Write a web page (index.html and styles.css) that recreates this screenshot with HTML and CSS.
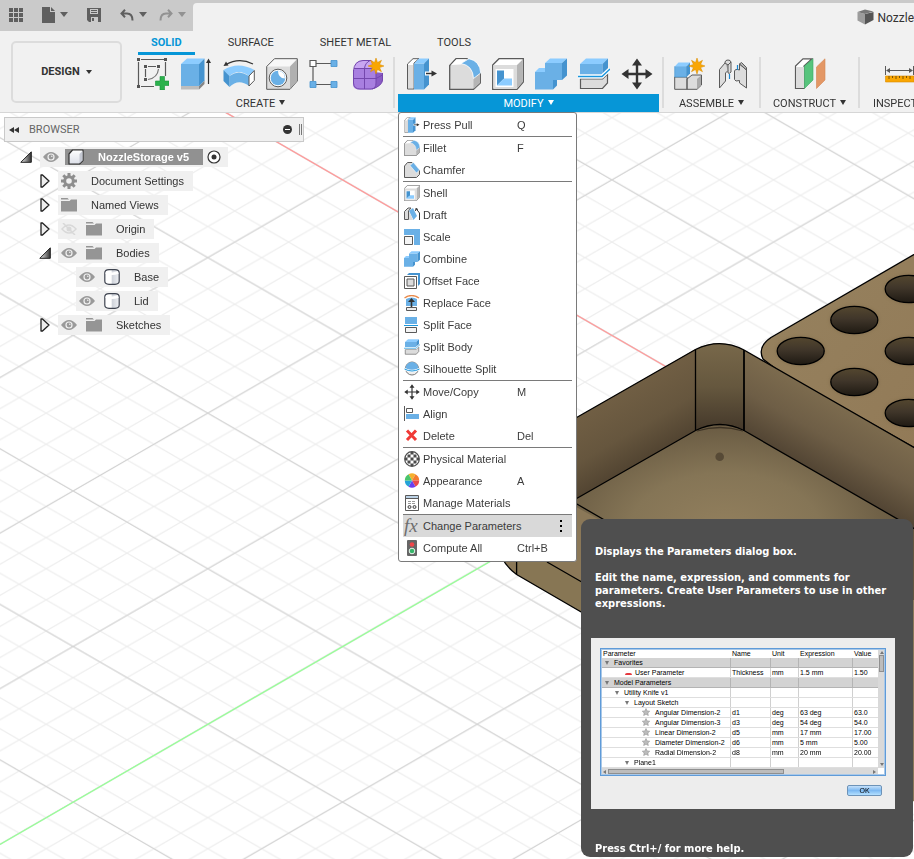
FILE: index.html
```html
<!DOCTYPE html>
<html lang="en">
<head>
<meta charset="utf-8">
<title>NozzleStorage v5</title>
<link rel="stylesheet" href="styles.css">
</head>
<body>

<svg class="defs" aria-hidden="true">
  <defs>
    <linearGradient id="fold" x1="0" y1="0" x2="1" y2="0"><stop offset="0" stop-color="#eee"/><stop offset="1" stop-color="#333"/></linearGradient>
    <linearGradient id="can" x1="0" y1="0" x2="1" y2="0"><stop offset="0" stop-color="#fff"/><stop offset=".45" stop-color="#fff"/><stop offset=".5" stop-color="#cfd3da"/><stop offset="1" stop-color="#eef0f4"/></linearGradient>
    <linearGradient id="cubeg" x1="0" y1="0" x2="0" y2="1"><stop offset="0" stop-color="#fff"/><stop offset="1" stop-color="#dcdfe8"/></linearGradient>
  </defs>
  <symbol id="star" viewBox="0 0 16 16"><path fill="#f9a602" stroke="#d98b00" stroke-width=".5" d="M8 0 9.5 4.5 13.500 2.300 11.600 6.400 16 8 11.600 9.600 13.500 13.700 9.500 11.500 8 16 6.500 11.500 2.500 13.700 4.400 9.600 0 8 4.400 6.400 2.500 2.300 6.500 4.500Z"/></symbol>
  <symbol id="presspull" viewBox="0 0 32 32">
    <path fill="#fff" stroke="#5a5a5a" d="M7 31H1.500V6L7 .7H13L8 5V31Z"/><path fill="#dcdcdc" d="M2 7h5v23H2z"/>
    <path fill="#6ab0e6" d="M8 5.500H18V31.500H8z"/><path fill="#8cccff" d="M8 5.500 13 .5H23L18 5.500z"/><path fill="#4593cf" d="M18 5.500 23 .5V26.500L18 31.500z"/>
    <path stroke="#fff" stroke-width="4" d="M19 15.500h8"/><path stroke="#333" stroke-width="1.500" d="M20 15.500h8"/><path fill="#333" d="M25.500 12.500 31 15.500 25.500 18.500z"/>
  </symbol>
  <symbol id="fillet" viewBox="0 0 32 32">
    <path fill="#dcdcdc" stroke="#5a5a5a" stroke-width="1.300" d="M.7 31.300V7.500L7 .7H18L31.300 15V25L24.500 31.300Z"/>
    <path fill="#b5b5b5" d="M24.500 20 31 15V25L24.500 31z"/><path fill="#fff" d="M2 7 7.500 1.300H18L12 6.500z"/>
    <path fill="#6ab0e6" stroke="#fff" stroke-width=".8" d="M12 5.500 20 .7Q31 3 31.700 15L24.500 20.500Q24 7.500 12 5.500Z"/>
  </symbol>
  <symbol id="chamfer" viewBox="0 0 32 32">
    <path fill="#dcdcdc" stroke="#5a5a5a" stroke-width="2" d="M1 31V8L7 1H16L31 17V25L25 31Z"/>
    <path fill="#6ab0e6" stroke="#fff" d="M12 7 19 1 31 16 25 22Z"/>
  </symbol>
  <symbol id="shell" viewBox="0 0 32 32">
    <path fill="#fff" stroke="#5a5a5a" stroke-width="1.300" d="M.7 31.300V7L7 .7H31.300V24L25 31.300Z"/><path fill="#b5b5b5" d="M25 7 30.700 1.500V24L25 30.500z"/><path fill="#dcdcdc" d="M1.500 7H25V30.500H1.500z"/>
    <path fill="#fff" d="M3.500 11H21.500V29H3.500z"/><path fill="#4593cf" d="M5 12.500H12V20.500L5 27.500z"/><path fill="#8cccff" d="M5 27.500 12 20.500H20V27.500z"/>
  </symbol>
  <symbol id="combine" viewBox="0 0 32 32">
    <path fill="#6ab0e6" d="M10 5H27V22H18V31.500H0V14H10z"/><path fill="#8cccff" d="M10 5 15 .5H32L27 5zM0 14 4 10H10V14z"/><path fill="#4593cf" d="M27 5 32 .5V17.500L27 22zM18 22H22V27.500L18 31.500z"/>
  </symbol>
  <symbol id="splitbody" viewBox="0 0 32 32">
    <path fill="#6ab0e6" d="M2 6H24.500V16.500H2z"/><path fill="#8cccff" d="M2 6 8 .5H30L24.500 6z"/><path fill="#4593cf" d="M24.500 6 30 .5V11L24.500 16.500z"/>
    <path fill="#dcdcdc" stroke="#5a5a5a" stroke-width="1.200" d="M2.500 21H24.500L29.500 16V25L24.500 30.500H2.500z"/>
    <path fill="none" stroke="#fff" stroke-width="4" d="M0 18.500H24L32 11"/><path fill="none" stroke="#1a96dd" stroke-width="1.400" d="M0 18.500H24L32 11"/>
  </symbol>
  <symbol id="move" viewBox="0 0 32 32"><path fill="none" stroke="#333" stroke-width="2.400" d="M16 4v24M4 16h24"/><path fill="#333" d="M16 .5 21 7.500H11zM16 31.500 21 24.500H11zM.5 16 7.500 11V21zM31.500 16 24.500 11V21z"/></symbol>
  <symbol id="eye" viewBox="0 0 16 12"><path fill="#9a9a9a" d="M0 6Q8-4 16 6Q8 16 0 6Z"/><circle cx="8" cy="6" r="3.600" fill="#f1f1f1"/><circle cx="8" cy="6" r="2.400" fill="#9a9a9a"/><circle cx="8.800" cy="5.200" r=".8" fill="#f1f1f1"/></symbol>
  <symbol id="folder" viewBox="0 0 16 14"><path fill="#959595" d="M0 0H6.500L8 1.500H0zM0 3H8.500L10 1.500H16V13.500H0z"/></symbol>
  <symbol id="closed" viewBox="0 0 10 14"><path fill="#eee" stroke="#222" stroke-width="1.300" stroke-linejoin="round" d="M1 1H2.500L9 7 2.500 13H1z"/></symbol>
  <symbol id="open" viewBox="0 0 12 12"><path fill="url(#fold)" stroke="#222" d="M11.300.8V11.300H.8z"/></symbol>
  <symbol id="body" viewBox="0 0 16 16"><path fill="url(#can)" stroke="#3f4450" stroke-width="1.200" d="M.8 4Q.8.800 5 .7H11Q15.200.8 15.200 4V12Q15.200 15.200 11 15.300H5Q.8 15.200.8 12Z"/><path fill="none" stroke="#fff" stroke-width="2.500" d="M1.800 3.500Q8 6 14.200 3.500"/></symbol>
  <symbol id="gstar" viewBox="0 0 16 16"><path fill="#bbb" stroke="#8b8b8b" d="M8 1 10.300 5.800 15.500 6.400 11.700 10 12.700 15.200 8 12.600 3.300 15.200 4.300 10 .5 6.400 5.700 5.800Z"/></symbol>
</svg>

<svg class="scene" viewBox="0 0 914 859" preserveAspectRatio="xMinYMin slice" aria-hidden="true">
  <defs>
    <pattern id="minor" patternUnits="userSpaceOnUse" x="73.1" y="335.4" width="53.88" height="31.11">
      <path stroke="#eeeeee" stroke-width="1.200" fill="none" d="M-5.388-3.111 59.268 34.221M-5.388 34.221 59.268-3.111"/>
    </pattern>
    <pattern id="major" patternUnits="userSpaceOnUse" x="73.1" y="335.4" width="269.4" height="155.55">
      <path stroke="#d0d0d0" stroke-width="1" fill="none" d="M-26.940-15.555 296.340 171.105M-26.940 171.105 296.340-15.555"/>
    </pattern>
    <linearGradient id="leftwall" gradientUnits="userSpaceOnUse" x1="620" y1="390" x2="662" y2="462"><stop offset="0" stop-color="#715f44"/><stop offset=".5" stop-color="#66563e"/><stop offset="1" stop-color="#4b3e2d"/></linearGradient>
    <linearGradient id="cornerwall" x1="0" y1="0" x2="0" y2="1"><stop offset="0" stop-color="#78684a"/><stop offset=".5" stop-color="#65573e"/><stop offset="1" stop-color="#44382a"/></linearGradient>
    <linearGradient id="rightwall" gradientUnits="userSpaceOnUse" x1="840" y1="405" x2="802" y2="472"><stop offset="0" stop-color="#7c6b4e"/><stop offset=".45" stop-color="#6e5e46"/><stop offset="1" stop-color="#4d4030"/></linearGradient>
    <radialGradient id="floor" gradientUnits="userSpaceOnUse" cx="725" cy="530" r="190" gradientTransform="translate(0 212) scale(1 .6)"><stop offset="0" stop-color="#927f5d"/><stop offset=".5" stop-color="#857556"/><stop offset="1" stop-color="#64563f"/></radialGradient>
    <linearGradient id="lid" x1="0" y1="0" x2="1" y2="1"><stop offset="0" stop-color="#96825f"/><stop offset="1" stop-color="#927a57"/></linearGradient>
    <linearGradient id="bore" x1="0" y1="0" x2="0" y2="1"><stop offset="0" stop-color="#54472f"/><stop offset=".45" stop-color="#40362a"/><stop offset="1" stop-color="#1f1a13"/></linearGradient>
    <filter id="soft" x="-20%" y="-20%" width="140%" height="140%"><feGaussianBlur stdDeviation="1.500"/></filter>
  </defs>
  <rect width="914" height="859" fill="#fff"/>
  <rect width="914" height="859" fill="url(#minor)"/>
  <rect width="914" height="859" fill="url(#major)"/>
  <path stroke="#ff9b9b" stroke-width="1.300" d="M207.800 102.100 690 380.500"/>
  <path stroke="#98ff98" stroke-width="1.300" d="M0 844.400 540 532.600"/>
  <!-- lid -->
  <path fill="url(#lid)" stroke="#000" stroke-width="1.300" d="M920 251 771 337.500Q757 347 763 359L780 372 920 451"/>
  <g fill="#7a6747" opacity=".5" filter="url(#soft)"><ellipse cx="800.700" cy="351" rx="25" ry="15"/><ellipse cx="854.300" cy="320" rx="25" ry="15"/><ellipse cx="854.300" cy="382" rx="25" ry="15"/><ellipse cx="908.700" cy="289" rx="25" ry="15"/><ellipse cx="908.700" cy="351" rx="25" ry="15"/><ellipse cx="908.700" cy="413" rx="25" ry="15"/></g>
  <g fill="url(#bore)" stroke="#000" stroke-width="1.300"><ellipse cx="800.700" cy="351" rx="23.500" ry="13.600"/><ellipse cx="854.300" cy="320" rx="23.500" ry="13.600"/><ellipse cx="854.300" cy="382" rx="23.500" ry="13.600"/><ellipse cx="908.700" cy="289" rx="23.500" ry="13.600"/><ellipse cx="908.700" cy="351" rx="23.500" ry="13.600"/><ellipse cx="908.700" cy="413" rx="23.500" ry="13.600"/></g>
  <!-- base -->
  <path fill="#8b7858" d="M500 462 695 349.500Q720 337 744 350L920 451V805L700 681 516.600 574.500Q500 562 500 548Z"/>
  <path fill="#84744f" opacity=".5" d="M547 562 700 650V681L516.600 574.500V562Z"/>
  <path fill="url(#floor)" d="M569 503 695 430.500Q720 418 744 430.500L920 532V600H745Z"/>
  <path fill="url(#leftwall)" d="M560 427 695.500 349.500V430.500L560 508Z"/>
  <path fill="url(#rightwall)" d="M744 350 920 451V532L744 430.500Z"/>
  <path fill="url(#cornerwall)" d="M695.500 349.500Q720 337.500 744 350V430.500Q720 418.500 695.500 430.500Z"/>
  <g fill="none" stroke="#000" stroke-width="1.300">
    <path d="M560 427 695.500 349.500Q720 337.500 744 350L920 451"/>
    <path d="M560 508 695.500 430.500Q720 418.500 744 430.500L920 532M695.500 349.500V430.500"/>
    <path stroke-width="1.800" d="M744 350V431"/>
    <path stroke="#3d3325" d="M697 431Q720 424 743 431"/>
    <path d="M576 503.500 620 529M547 562 620 604M516.600 556V574.500M500 548Q500 562 516.600 574.500L700 681"/>
  </g>
  <circle cx="719.700" cy="456.800" r="4.300" fill="#574a36"/>
</svg>

<header class="header">
  <div class="topbar">
    <div class="quick">
      <button class="plain" aria-label="Apps"><svg width="14" height="14" viewBox="0 0 14 14"><path fill="#5f5f5f" d="M0 0h4v4H0zM5 0h4v4H5zM10 0h4v4h-4zM0 5h4v4H0zM5 5h4v4H5zM10 5h4v4h-4zM0 10h4v4H0zM5 10h4v4H5zM10 10h4v4h-4z"/></svg></button>
      <button class="plain" aria-label="File"><svg width="13" height="16" viewBox="0 0 13 16"><path fill="#5f5f5f" d="M0 0H8V5H13V16H0zM9 0 13 4H9z"/></svg><i class="caret"></i></button>
      <button class="plain" aria-label="Save"><svg width="14" height="14" viewBox="0 0 14 14"><path fill="#5f5f5f" d="M0 0H14V14H2L0 12z"/><path fill="#cacaca" d="M3 1h8v5H3zM4 9h7v5H4z"/><path fill="#5f5f5f" d="M4 2h6v1H4zM4 4h6v1H4zM5 10h2v3H5z"/></svg></button>
      <button class="plain" aria-label="Undo"><svg width="14" height="12" viewBox="0 0 14 12"><path fill="none" stroke="#5f5f5f" stroke-width="2" d="M5 .8 1.500 4.500 5 8.200M2 4.500H7Q12.500 4.500 12.500 11.500"/></svg><i class="caret"></i></button>
      <button class="plain dim" aria-label="Redo"><svg width="14" height="12" viewBox="0 0 14 12"><path fill="none" stroke="#929292" stroke-width="2" d="M9 .8 12.500 4.500 9 8.200M12 4.500H7Q1.500 4.500 1.500 11.500"/></svg><i class="caret"></i></button>
    </div>
    <div class="doctab">
      <svg width="17" height="16" viewBox="0 0 17 16"><path fill="#9c9c9c" d="M.5 3 8 5V15.500L.5 11.500z"/><path fill="#555" d="M8 5 16.500 3V11L8 15.500z"/><path fill="#777" d="M.5 3 8 .5 16.500 2.500 8 5z"/></svg>
      <span class="doctitle">Nozzle</span>
    </div>
  </div>

  <div class="ribbon">
    <button class="workspace">DESIGN<i class="caret"></i></button>
    <div class="ribbonmain">
      <nav class="tabs">
        <button class="tab active">SOLID</button><button class="tab">SURFACE</button><button class="tab">SHEET METAL</button><button class="tab">TOOLS</button>
      </nav>
      <div class="groups">
        <section class="group create">
          <div class="tools">
            <button class="tool" aria-label="Create Sketch"><svg viewBox="0 0 32 32"><path fill="none" stroke="#5a5a5a" stroke-width="1.200" d="M4 1.500H27M1.500 4V27M28.500 4V18M4 28.500H17M11 8.500H19M8.500 11V19"/><path fill="none" stroke="#777" stroke-width="1.200" d="M21.500 11Q20.500 20 11 21.500"/><path fill="#555" d="M0 0h3v3H0zM27 0h3v3h-3zM0 27h3v3H0zM7 7h3v3H7zM20 7h3v3h-3zM7 20h3v3H7z"/><path fill="#2bb24c" stroke="#17923a" stroke-width=".6" d="M23 18.500h4.500V23H32v4.500H27.500V32H23V27.500H18.500V23H23z"/></svg></button>
            <button class="tool" aria-label="Extrude"><svg viewBox="0 0 32 32"><path fill="#bdbdbd" d="M1 28H19V31.500H1z"/><path fill="#858585" d="M19 28 24.500 22.500V26L19 31.500z"/><path fill="#6ab0e6" d="M1 6H19V28H1z"/><path fill="#8cccff" d="M1 6 7 .5H24.500L19 6z"/><path fill="#4593cf" d="M19 6 24.500.5V22.500L19 28z"/><path stroke="#333" stroke-width="1.200" d="M28.500 26V3"/><path fill="#333" d="M28.500.5 31 5H26z"/></svg></button>
            <button class="tool" aria-label="Revolve"><svg viewBox="0 0 32 32"><path fill="#8cccff" d="M.5 12Q15 3 31.500 12L26 18Q15.500 10 6.500 18z"/><path fill="#6ab0e6" d="M6.500 18Q15.500 11 26 18V28Q15.500 20 6.500 29z"/><path fill="#4593cf" d="M.5 12 6.500 18V29L.5 23z"/><path fill="#fff" stroke="#5a5a5a" d="M26 18 31.300 12.500V22.500L26 28z"/><path fill="none" stroke="#333" stroke-width="1.200" d="M3 6.500Q16-1 30 6"/><path fill="#333" d="M.5 8 3 3.500 5.500 7.500z"/></svg></button>
            <button class="tool" aria-label="Hole"><svg viewBox="0 0 32 32"><path fill="#dcdcdc" stroke="#5a5a5a" d="M.7 31.300V8.500L8.500.7H31.300V23L24 31.300Z"/><path fill="#f8f8f8" d="M1.500 8.500 8.500 1.500H30.500L24 8.500z"/><path fill="#b0b0b0" d="M24 8.500 31 1.500V23L24 31z"/><circle cx="12" cy="20" r="8.800" fill="#fff" stroke="#5a5a5a"/><circle cx="12" cy="20" r="7.300" fill="#6ab0e6"/><path fill="#fff" d="M12 12.700A7.300 7.300 0 0 1 19 20.500Q12 20 12 12.700Z"/></svg></button>
            <button class="tool" aria-label="Rectangular Pattern"><svg viewBox="0 0 32 32"><path stroke="#5a5a5a" stroke-width="1.200" d="M7 5.500H22M4 9V23M7 26.500H22"/><path fill="#fff" stroke="#5a5a5a" stroke-width="1.200" d="M1 2.500H7V8.500H1z"/><path fill="#6ab0e6" stroke="#4593cf" stroke-width=".8" d="M22 2.500H28V8.500H22zM22 23.500H28V29.500H22zM1 23.500H7V29.500H1z"/></svg></button>
            <button class="tool" aria-label="Create Form"><svg viewBox="0 0 32 32"><path fill="#8a5cc4" d="M22 14 31 15V22Q30 27 22 31z"/><path fill="#c8a6f2" d="M2 12Q2 3 11 2H20L24 12z"/><rect x="1" y="10" width="23" height="21.500" rx="5" fill="#a87fe0"/><path fill="none" stroke="#7447ae" d="M1.500 13Q2 3 11 2.500H19M1.500 12V25Q2 31 8 31H19Q24 31 24 25V12M12.500 10.500V31M1.500 20.500H24L30.500 17M2 10.500H23M12.500 10.500Q13 5 18 2.500M20 31Q30 28 30.500 22V15"/><use href="#star" x="16" y="0" width="16" height="16"/></svg></button>
          </div>
          <button class="grouplabel">CREATE<i class="caret"></i></button>
        </section>
        <section class="group modify">
          <div class="tools">
            <button class="tool" aria-label="Press Pull"><svg><use href="#presspull"/></svg></button>
            <button class="tool" aria-label="Fillet"><svg><use href="#fillet"/></svg></button>
            <button class="tool" aria-label="Shell"><svg><use href="#shell"/></svg></button>
            <button class="tool" aria-label="Combine"><svg><use href="#combine"/></svg></button>
            <button class="tool" aria-label="Split Body"><svg><use href="#splitbody"/></svg></button>
            <button class="tool" aria-label="Move/Copy"><svg><use href="#move"/></svg></button>
          </div>
          <button class="grouplabel">MODIFY<i class="caret"></i></button>

          <ul class="menu">
            <li><button class="item"><svg><use href="#presspull"/></svg><span>Press Pull</span><kbd>Q</kbd></button></li>
            <li class="sep"><button class="item"><svg><use href="#fillet"/></svg><span>Fillet</span><kbd>F</kbd></button></li>
            <li><button class="item"><svg><use href="#chamfer"/></svg><span>Chamfer</span></button></li>
            <li class="sep"><button class="item"><svg><use href="#shell"/></svg><span>Shell</span></button></li>
            <li><button class="item"><svg viewBox="0 0 16 16"><path fill="#dcdcdc" stroke="#5a5a5a" d="M.5 12.500V4.500L4 1H7L4.500 4V12.500z"/><path fill="#6ab0e6" d="M5 4 9 1 13 9 9.500 13z"/><path fill="#dcdcdc" d="M5 4 9 13H5z"/><path fill="none" stroke="#333" d="M15.500 13V6L12 1.500M11.500 4 12 1.500 14 2.500"/></svg><span>Draft</span></button></li>
            <li><button class="item"><svg viewBox="0 0 16 16"><path fill="#6ab0e6" d="M0 0H16V16H10V6H0z"/><path fill="#f4f4f4" stroke="#5a5a5a" d="M.5 7.500H8.500V15.500H.5z"/></svg><span>Scale</span></button></li>
            <li><button class="item"><svg><use href="#combine"/></svg><span>Combine</span></button></li>
            <li><button class="item"><svg viewBox="0 0 16 16"><path fill="#4593cf" d="M3 2 5 0H16V11L14 13V2z"/><path fill="#fff" stroke="#5a5a5a" d="M.5 3.500H12.500V15.500H.5z"/><path fill="#dcdcdc" stroke="#5a5a5a" d="M3 6H10V13H3z"/></svg><span>Offset Face</span></button></li>
            <li><button class="item"><svg viewBox="0 0 16 16"><path fill="none" stroke="#e98a4b" stroke-width="1.300" d="M.5 3Q7.500-2 15 3"/><path fill="#6ab0e6" d="M2 4Q8 1 13 4V11H2z"/><path fill="#333" d="M6.700 12V7H4L7.500 3 11 7H8.300V12z"/><path fill="#eee" stroke="#5a5a5a" d="M2.500 12.500H12.500V15.500H2.500z"/></svg><span>Replace Face</span></button></li>
            <li><button class="item"><svg viewBox="0 0 16 16"><path fill="#6ab0e6" d="M1 0H13V7H1z"/><path fill="#1a96dd" d="M0 8H14V9H0z"/><path fill="#f4f4f4" stroke="#5a5a5a" d="M1.500 10.500H12.500V15.500H1.500z"/></svg><span>Split Face</span></button></li>
            <li><button class="item"><svg><use href="#splitbody"/></svg><span>Split Body</span></button></li>
            <li><button class="item"><svg viewBox="0 0 16 16"><circle cx="8" cy="7.500" r="6.500" fill="#eee" stroke="#777"/><path fill="#6ab0e6" d="M1.500 7.500a6.500 6.500 0 0 1 13 0Q8 11 1.500 7.500z"/><path fill="none" stroke="#fff" stroke-width="2.500" d="M.5 8Q8 12 15.500 8"/><path fill="none" stroke="#1a96dd" d="M.5 8Q8 12 15.500 8"/></svg><span>Silhouette Split</span></button></li>
            <li class="sep"><button class="item"><svg><use href="#move"/></svg><span>Move/Copy</span><kbd>M</kbd></button></li>
            <li><button class="item"><svg viewBox="0 0 16 16"><path stroke="#5a5a5a" d="M.5 0V15"/><path fill="#fff" stroke="#5a5a5a" d="M2.500 2.500H8.500V6.500H2.500z"/><path fill="#6ab0e6" d="M2 8H15V13H2z"/></svg><span>Align</span></button></li>
            <li><button class="item"><svg viewBox="0 0 16 16"><path fill="none" stroke="#f03a36" stroke-width="3" d="M3 2.500 12 12M12 2.500 3 12"/></svg><span>Delete</span><kbd>Del</kbd></button></li>
            <li class="sep"><button class="item"><svg viewBox="0 0 16 16"><circle cx="8" cy="8" r="7.300" fill="#fff" stroke="#4c4c4c" stroke-width="1.200"/><path fill="#4c4c4c" d="M6.500 6.500h3v3h-3zM3.500 3.500h3v3h-3zM9.500 3.500h3v3h-3zM3.500 9.500h3v3h-3zM9.500 9.500h3v3h-3zM6.500 1h3v2.500h-3zM6.500 12.500h3V15h-3zM1 6.500h2.500v3H1zM12.500 6.500H15v3h-2.500z"/></svg><span>Physical Material</span></button></li>
            <li><button class="item"><svg viewBox="0 0 16 16"><path fill="#f5b02e" d="M8 7.500 4.500 1.300A7.200 7.200 0 0 1 11.500 1.300z"/><path fill="#f47b30" d="M8 7.500 11.500 1.300A7.200 7.200 0 0 1 15.200 7.500z"/><path fill="#e8484d" d="M8 7.500H15.200A7.200 7.200 0 0 1 11.500 13.700z"/><path fill="#6a3df0" d="M8 7.500 11.500 13.700A7.200 7.200 0 0 1 4.500 13.700z"/><path fill="#24a3d8" d="M8 7.500 4.500 13.700A7.200 7.200 0 0 1 .8 7.500z"/><path fill="#4ac46b" d="M8 7.500H.8A7.200 7.200 0 0 1 4.500 1.300z"/></svg><span>Appearance</span><kbd>A</kbd></button></li>
            <li><button class="item"><svg viewBox="0 0 16 16"><path fill="#fff" stroke="#5a5a5a" d="M1.500.5H14.500V15.500H1.500z"/><path fill="#bcd2e6" d="M2 1H14V3H2z"/><path stroke="#5a5a5a" d="M2 3.500H14"/><path stroke="#999" stroke-dasharray="3 1" d="M4 6.500H12M4 8.500H12"/><g fill="#ddd" stroke="#444"><circle cx="5.500" cy="12" r="1.500"/><circle cx="10.500" cy="12" r="1.500"/></g></svg><span>Manage Materials</span></button></li>
            <li class="sep current"><button class="item"><em class="fx">fx</em><span>Change Parameters</span><svg class="dots" viewBox="0 0 4 14"><path d="M1 1h2v2H1zM1 6h2v2H1zM1 11h2v2H1z"/></svg></button>
              <div class="tooltip" role="tooltip">
                <p>Displays the Parameters dialog box.</p>
                <p>Edit the name, expression, and comments for parameters. Create User Parameters to use in other expressions.</p>
                <div class="preview">
                  <div class="sheet">
                    <table>
                      <colgroup><col class="c1"><col class="c2"><col class="c3"><col class="c4"><col class="c5"></colgroup>
                      <thead><tr><th>Parameter</th><th>Name</th><th>Unit</th><th>Expression</th><th>Value</th></tr></thead>
                      <tbody>
                        <tr class="band"><td class="l0"><i class="tw"></i>Favorites</td><td></td><td></td><td></td><td></td></tr>
                        <tr><td class="l2"><i class="fav"></i>User Parameter</td><td>Thickness</td><td>mm</td><td>1.5 mm</td><td>1.50</td></tr>
                        <tr class="band"><td class="l0"><i class="tw"></i>Model Parameters</td><td></td><td></td><td></td><td></td></tr>
                        <tr><td class="l1"><i class="tw"></i>Utility Knife v1</td><td></td><td></td><td></td><td></td></tr>
                        <tr><td class="l2"><i class="tw"></i>Layout Sketch</td><td></td><td></td><td></td><td></td></tr>
                        <tr><td class="l4"><svg><use href="#gstar"/></svg>Angular Dimension-2</td><td>d1</td><td>deg</td><td>63 deg</td><td>63.0</td></tr>
                        <tr><td class="l4"><svg><use href="#gstar"/></svg>Angular Dimension-3</td><td>d3</td><td>deg</td><td>54 deg</td><td>54.0</td></tr>
                        <tr><td class="l4"><svg><use href="#gstar"/></svg>Linear Dimension-2</td><td>d5</td><td>mm</td><td>17 mm</td><td>17.00</td></tr>
                        <tr><td class="l4"><svg><use href="#gstar"/></svg>Diameter Dimension-2</td><td>d6</td><td>mm</td><td>5 mm</td><td>5.00</td></tr>
                        <tr><td class="l4"><svg><use href="#gstar"/></svg>Radial Dimension-2</td><td>d8</td><td>mm</td><td>20 mm</td><td>20.00</td></tr>
                        <tr><td class="l2"><i class="tw"></i>Plane1</td><td></td><td></td><td></td><td></td></tr>
                      </tbody>
                    </table>
                    <div class="vbar"><i class="up"></i><b></b><i class="down"></i></div>
                    <div class="hbar"><i class="left"></i><b></b><i class="right"></i></div>
                  </div>
                  <button class="ok">OK</button>
                </div>
                <p class="help">Press Ctrl+/ for more help.</p>
              </div>
            </li>
            <li><button class="item"><svg viewBox="0 0 16 16"><rect x="3" y="0" width="10" height="16" rx="1" fill="#666"/><circle cx="8" cy="4.500" r="2.300" fill="#f0474a"/><circle cx="8" cy="11" r="2.800" fill="#37b56a" stroke="#e8f5ec"/></svg><span>Compute All</span><kbd>Ctrl+B</kbd></button></li>
          </ul>
        </section>
        <section class="group assemble">
          <div class="tools">
            <button class="tool" aria-label="New Component"><svg viewBox="0 0 32 32"><path fill="#dcdcdc" stroke="#5a5a5a" d="M.7 19H13V31.300H.7zM13 21 18 17H27.500V27L23 31.300H13z"/><path fill="#aaa" d="M23 21 27 17.500V27L23 31z"/><path fill="#6ab0e6" stroke="#4593cf" stroke-width=".6" d="M.7 8.500H12.500V19H.7z"/><path fill="#8cccff" d="M.7 8.500 4.500 4.500H16L12.500 8.500z"/><path fill="#4593cf" d="M12.500 8.500 16 4.500V15.500L12.500 19z"/><use href="#star" x="15" y="0" width="16" height="16"/></svg></button>
            <button class="tool" aria-label="Joint"><svg viewBox="0 0 32 32"><path fill="#dcdcdc" stroke="#5a5a5a" stroke-linejoin="round" d="M2.500 11.500 8 5V4Q8.500 2 11 2T14 4V14Q12.500 16 11 15V12.500L8.500 15V23L2.500 30zM29.500 30 22.500 25V22.500Q18 24 17.500 21.500V13Q18 11 20.500 11.500L22.500 12V6L29.500 12z"/><path fill="#b5b5b5" stroke="#5a5a5a" stroke-linejoin="round" d="M22.500 6 24.500 4.500 29.500 9.500V12zM8 5 11 7V12.500M11 7 14 4"/><path stroke="#1a86d0" stroke-width="1.200" d="M12.500 16V21M20.500 7V12"/></svg></button>
          </div>
          <button class="grouplabel">ASSEMBLE<i class="caret"></i></button>
        </section>
        <section class="group construct">
          <div class="tools">
            <button class="tool" aria-label="Offset Plane"><svg viewBox="0 0 32 32"><path fill="#fff" stroke="#5a5a5a" stroke-width="1.200" d="M1.500 30.500V8L9 .8H18L10 8V30.500z"/><path fill="#dcdcdc" d="M2 9H10V30H2z"/><path fill="#56c47c" stroke="#39a862" stroke-width=".6" d="M10.500 8 19 .8V22L10.500 30.500z"/><path fill="#e39765" stroke="#d48653" stroke-width=".6" d="M22.500 9 31 .8V22L22.500 30.500z"/></svg></button>
          </div>
          <button class="grouplabel">CONSTRUCT<i class="caret"></i></button>
        </section>
        <section class="group inspect">
          <div class="tools">
            <button class="tool" aria-label="Measure"><svg viewBox="0 0 32 32"><path stroke="#5a5a5a" d="M1.500 8V17M29.500 8V17M4 12.500H27"/><path fill="#5a5a5a" d="M2 12.500 6 10V15zM29 12.500 25 10V15z"/><path fill="#f9a602" stroke="#d98b00" stroke-width=".6" d="M1.500 18H30V24H1.500z"/><path stroke="#7d5200" d="M5 18v3M8.500 18v2M12 18v3M15.500 18v2M19 18v3M22.500 18v2M26 18v3"/></svg></button>
          </div>
          <button class="grouplabel">INSPECT<i class="caret"></i></button>
        </section>
      </div>
    </div>
  </div>
</header>

<aside class="browser">
  <div class="panelhead">
    <svg width="10" height="6" viewBox="0 0 10 6"><path fill="#333" d="M5 0V6L0 3zM10 0V6L5 3z"/></svg>
    <h2>BROWSER</h2>
    <svg width="9" height="9" viewBox="0 0 9 9"><circle cx="4.500" cy="4.500" r="4.500" fill="#333"/><path fill="#fff" d="M2 4h5v1H2z"/></svg>
    <i class="grip"></i>
  </div>
  <ul class="tree">
    <li class="root"><svg class="twist"><use href="#open"/></svg><div class="pill"><svg class="eye"><use href="#eye"/></svg><div class="selected"><svg class="ico" viewBox="0 0 16 16"><path fill="url(#cubeg)" stroke="#333" stroke-width="1.200" stroke-linejoin="round" d="M1 5 4.500 1H15V11.500L11.500 15H1z"/><path fill="#c4c8d2" d="M11.500 5 14.500 2V11.500L11.500 14.500z"/></svg><span>NozzleStorage v5</span></div><svg class="radio" viewBox="0 0 14 14"><circle cx="7" cy="7" r="6" fill="#fff" stroke="#333" stroke-width="1.200"/><circle cx="7" cy="7" r="2.500" fill="#333"/></svg></div></li>
    <li><svg class="twist"><use href="#closed"/></svg><div class="pill"><svg class="ico" viewBox="0 0 16 16"><circle cx="8" cy="8" r="4.300" fill="none" stroke="#8e8e8e" stroke-width="3"/><path stroke="#8e8e8e" stroke-width="3" d="M8 0V3M8 13V16M0 8H3M13 8H16M2.300 2.300 4.500 4.500M11.500 11.500 13.700 13.700M2.300 13.700 4.500 11.500M11.500 4.500 13.700 2.300"/></svg><span>Document Settings</span></div></li>
    <li><svg class="twist"><use href="#closed"/></svg><div class="pill"><svg class="ico"><use href="#folder"/></svg><span>Named Views</span></div></li>
    <li><svg class="twist"><use href="#closed"/></svg><div class="pill"><svg class="eye" viewBox="0 0 16 12"><path fill="none" stroke="#d8d8d8" stroke-width="1.500" d="M1 6Q8-2 15 6Q8 14 1 6ZM2 0 14 12"/><circle cx="8" cy="6" r="2.500" fill="#d8d8d8"/></svg><svg class="ico"><use href="#folder"/></svg><span>Origin</span></div></li>
    <li><svg class="twist"><use href="#open"/></svg><div class="pill"><svg class="eye"><use href="#eye"/></svg><svg class="ico"><use href="#folder"/></svg><span>Bodies</span></div></li>
    <li class="leaf"><div class="pill"><svg class="eye"><use href="#eye"/></svg><svg class="ico"><use href="#body"/></svg><span>Base</span></div></li>
    <li class="leaf"><div class="pill"><svg class="eye"><use href="#eye"/></svg><svg class="ico"><use href="#body"/></svg><span>Lid</span></div></li>
    <li><svg class="twist"><use href="#closed"/></svg><div class="pill"><svg class="eye"><use href="#eye"/></svg><svg class="ico"><use href="#folder"/></svg><span>Sketches</span></div></li>
  </ul>
</aside>

</body>
</html>
```
FILE: styles.css
```css
* { box-sizing: border-box; }

body {
  margin: 0;
  min-height: 100vh;
  overflow: hidden;
  font: 11px/16px "Liberation Sans", Arial, sans-serif;
  color: #333;
}

ul { margin: 0; padding: 0; list-style: none; }
svg { display: block; flex: none; }

button {
  margin: 0;
  padding: 0;
  border: 0;
  background: none;
  color: inherit;
  font: inherit;
}

.defs { position: absolute; width: 0; height: 0; }

.scene {
  position: fixed;
  inset: 0;
  z-index: -1;
  width: 100%;
  height: 100%;
}

.caret {
  flex: none;
  border: solid transparent;
  border-width: 5px 4px 0;
  border-top-color: currentColor;
}

/* Header */
.header {
  position: relative;
  z-index: 2;
  border-bottom: 1px solid #d6d6d6;
  background: #f1f1f1;
  font-family: Roboto, Arial, sans-serif;
}

.topbar { display: flex; height: 31px; background: #cacaca; }

.quick {
  display: flex;
  flex: none;
  gap: 19px;
  width: 193px;
  padding: 0 0 2px 9px;
  color: #5f5f5f;
}

.plain { display: flex; align-items: center; gap: 5px; }
.plain + .plain.dim { margin-left: -7px; color: #929292; }

.doctab {
  display: flex;
  flex: 1;
  align-items: center;
  justify-content: flex-end;
  gap: 4px;
  margin-top: 3px;
  border-top-left-radius: 4px;
  background: #f1f1f1;
  font-size: 12px;
}

.doctitle { padding-top: 1px; }

.ribbon { display: flex; height: 81px; }

.workspace {
  display: flex;
  flex: none;
  align-items: center;
  justify-content: center;
  gap: 6px;
  width: 111px;
  height: 62px;
  margin: 10px 9px 0 11px;
  border: 2px solid #dcdcdc;
  border-radius: 5px;
  font-weight: 700;
}

.workspace .caret { border-width: 4px 3px 0; }

.ribbonmain { flex: 1; min-width: 0; }

.tabs { display: flex; gap: 20px; height: 24px; padding-left: 7px; }

.tab {
  padding: 2px 13px 0;
  border-bottom: 3px solid transparent;
  white-space: nowrap;
}

.tab.active { border-color: #0696d7; color: #0696d7; font-weight: 700; }

.groups { display: flex; height: 57px; }

.group {
  position: relative;
  display: flex;
  flex: none;
  flex-direction: column;
  justify-content: space-between;
}

.group::after {
  position: absolute;
  top: 2px;
  right: -5px;
  width: 2px;
  height: 51px;
  background: #dcdcdc;
  content: "";
}

.group.create { width: 259px; margin-right: 8px; }
.group.modify { width: 261px; margin-right: 8px; }
.group.assemble { width: 89px; margin-right: 8px; }
.group.construct { width: 91px; margin-right: 8px; }
.group.inspect { width: 74px; }

.tools { display: flex; justify-content: center; padding-top: 3px; }
.modify .tools { padding-left: 2px; }
.tool { display: flex; justify-content: center; width: 43px; }
.tool svg { width: 32px; height: 32px; }

.grouplabel {
  display: flex;
  align-items: center;
  justify-content: center;
  gap: 4px;
  height: 18px;
  padding-top: 1px;
}

.grouplabel .caret { margin-bottom: 2px; border-width: 5px 3px 0; }
.modify .grouplabel { background: #0696d7; color: #fff; }

/* Modify menu */
.menu {
  position: absolute;
  top: 100%;
  left: 0;
  width: 179px;
  padding: 1px 4px 2px;
  border: 1px solid #7a7a7a;
  border-radius: 3px;
  background: #fff;
  color: #3c3c3c;
  font-family: "Liberation Sans", Arial, sans-serif;
}

.sep { border-top: 1px solid #7a7a7a; }
.current { position: relative; background: #d9d9d9; }

.item {
  display: grid;
  grid-template-columns: 17px 92px 1fr;
  gap: 2px;
  align-items: center;
  width: 100%;
  height: 22px;
  padding-left: 1px;
  text-align: left;
  white-space: nowrap;
}

.item svg { width: 16px; height: 16px; }
.item kbd { font: inherit; }
.item .dots { width: 4px; height: 14px; margin-left: 42px; }
.fx { color: #6e6e6e; font: italic 19px/16px "Liberation Serif", serif; }

/* Tooltip */
.tooltip {
  position: absolute;
  top: 4px;
  left: 178px;
  width: 332px;
  padding: 26px 10px 2px;
  border-radius: 9px;
  background: #4f4f4f;
  color: #fff;
  font: 700 11px/13px "DejaVu Sans Condensed", "DejaVu Sans", sans-serif;
}

.tooltip p { margin: 0 0 13px; padding: 0 4px; }
.tooltip .help { margin: 33px 0 0; }

.preview {
  width: 304px;
  height: 171px;
  margin-top: 28px;
  padding: 10px 9px 9px;
  background: #ededed;
  color: #000;
  font: 7px/10px "Liberation Sans", Arial, sans-serif;
}

.sheet {
  display: grid;
  grid-template-columns: 1fr 7px;
  width: 286px;
  border: 1px solid #5f9bd8;
  outline: 1px solid #a9c8e8;
  outline-offset: -2px;
  background: #fff;
}

.sheet table { width: 277px; border-collapse: collapse; table-layout: fixed; }
.c1 { width: 129px; }
.c2 { width: 40px; }
.c3 { width: 28px; }
.c4 { width: 54px; }
.c5 { width: 26px; }

.sheet th {
  height: 9px;
  padding: 0 0 0 2px;
  font-weight: 400;
  line-height: 9px;
  text-align: left;
}

.sheet td {
  height: 10px;
  padding: 0 0 0 2px;
  box-shadow: inset 0 -1px #dedede, inset 1px 0 #d0d0d0;
  line-height: 10px;
  white-space: nowrap;
}

.sheet td svg { display: inline-block; width: 8px; height: 8px; margin-right: 5px; vertical-align: -1px; }
.band { background: #d3d3d3; }
.sheet .band td { box-shadow: inset 0 -1px #b4b4b4, inset 1px 0 #b4b4b4; }
.sheet .l0 { padding-left: 4px; }
.sheet .l1 { padding-left: 14px; }
.sheet .l2 { padding-left: 24px; }
.sheet .l4 { padding-left: 41px; }

.tw {
  display: inline-block;
  margin-right: 5px;
  border: solid transparent;
  border-width: 4px 2px 0;
  border-top-color: #777;
}

.fav {
  display: inline-block;
  width: 7px;
  height: 2px;
  margin-right: 3px;
  border-radius: 2px 2px 0 0;
  background: #e5393f;
}

.vbar, .hbar { display: flex; background: #d9d9d9; }
.vbar { flex-direction: column; align-items: center; padding: 2px 0; }
.vbar b { width: 5px; height: 17px; margin-top: 1px; border: 1px solid #8f8f8f; background: #bcbcbc; }
.vbar .down { margin-top: auto; }
.hbar { align-items: center; gap: 2px; height: 7px; padding: 0 2px; }
.hbar b { width: 176px; height: 5px; border: 1px solid #8f8f8f; background: #bcbcbc; }
.hbar .right { margin-left: auto; }
.up { border: solid transparent; border-width: 0 2px 3px; border-bottom-color: #777; }
.down { border: solid transparent; border-width: 3px 2px 0; border-top-color: #777; }
.left { border: solid transparent; border-width: 2px 3px 2px 0; border-right-color: #777; }
.right { border: solid transparent; border-width: 2px 0 2px 3px; border-left-color: #777; }

.ok {
  display: block;
  width: 35px;
  height: 11px;
  margin: 9px 4px 0 auto;
  border: 1px solid #6d93b8;
  border-radius: 2px;
  background: linear-gradient(#c4e0fa, #7db9f2 50%, #b3e0ff);
  line-height: 9px;
}

/* Browser panel */
.browser { margin: 4px 0 0 4px; width: 300px; }

.panelhead {
  display: flex;
  align-items: center;
  height: 25px;
  padding-left: 4px;
  border: 1px solid #c9c9c9;
  background: #f0f0f0;
}

.panelhead h2 {
  flex: 1;
  margin: 0 0 0 10px;
  color: #666;
  font: 400 11px/16px Roboto, Arial, sans-serif;
}

.grip {
  width: 3px;
  height: 11px;
  margin: 0 1px 0 7px;
  border: solid #777;
  border-width: 0 1px;
}

.tree { padding-top: 3px; }
.tree li { display: flex; align-items: center; height: 24px; padding-left: 35px; }
.tree .root { padding-left: 16px; }
.tree .leaf { padding-left: 72px; }
.twist { width: 12px; height: 14px; margin-right: 7px; }

.pill {
  display: flex;
  align-items: center;
  height: 20px;
  padding: 0 9px 0 3px;
  background: #f0f0f0;
}

.pill .eye { width: 16px; height: 12px; margin-right: 9px; }
.pill .ico { width: 16px; height: 16px; margin-right: 14px; }
.root .pill { padding: 0 7px 0 3px; margin-left: 1px; }
.root .eye { margin-right: 6px; }

.selected {
  display: flex;
  align-items: center;
  height: 16px;
  padding: 0 14px 0 3px;
  background: #919191;
  color: #fff;
  font-weight: 700;
}

.radio { width: 14px; height: 14px; margin-left: 4px; }
```
